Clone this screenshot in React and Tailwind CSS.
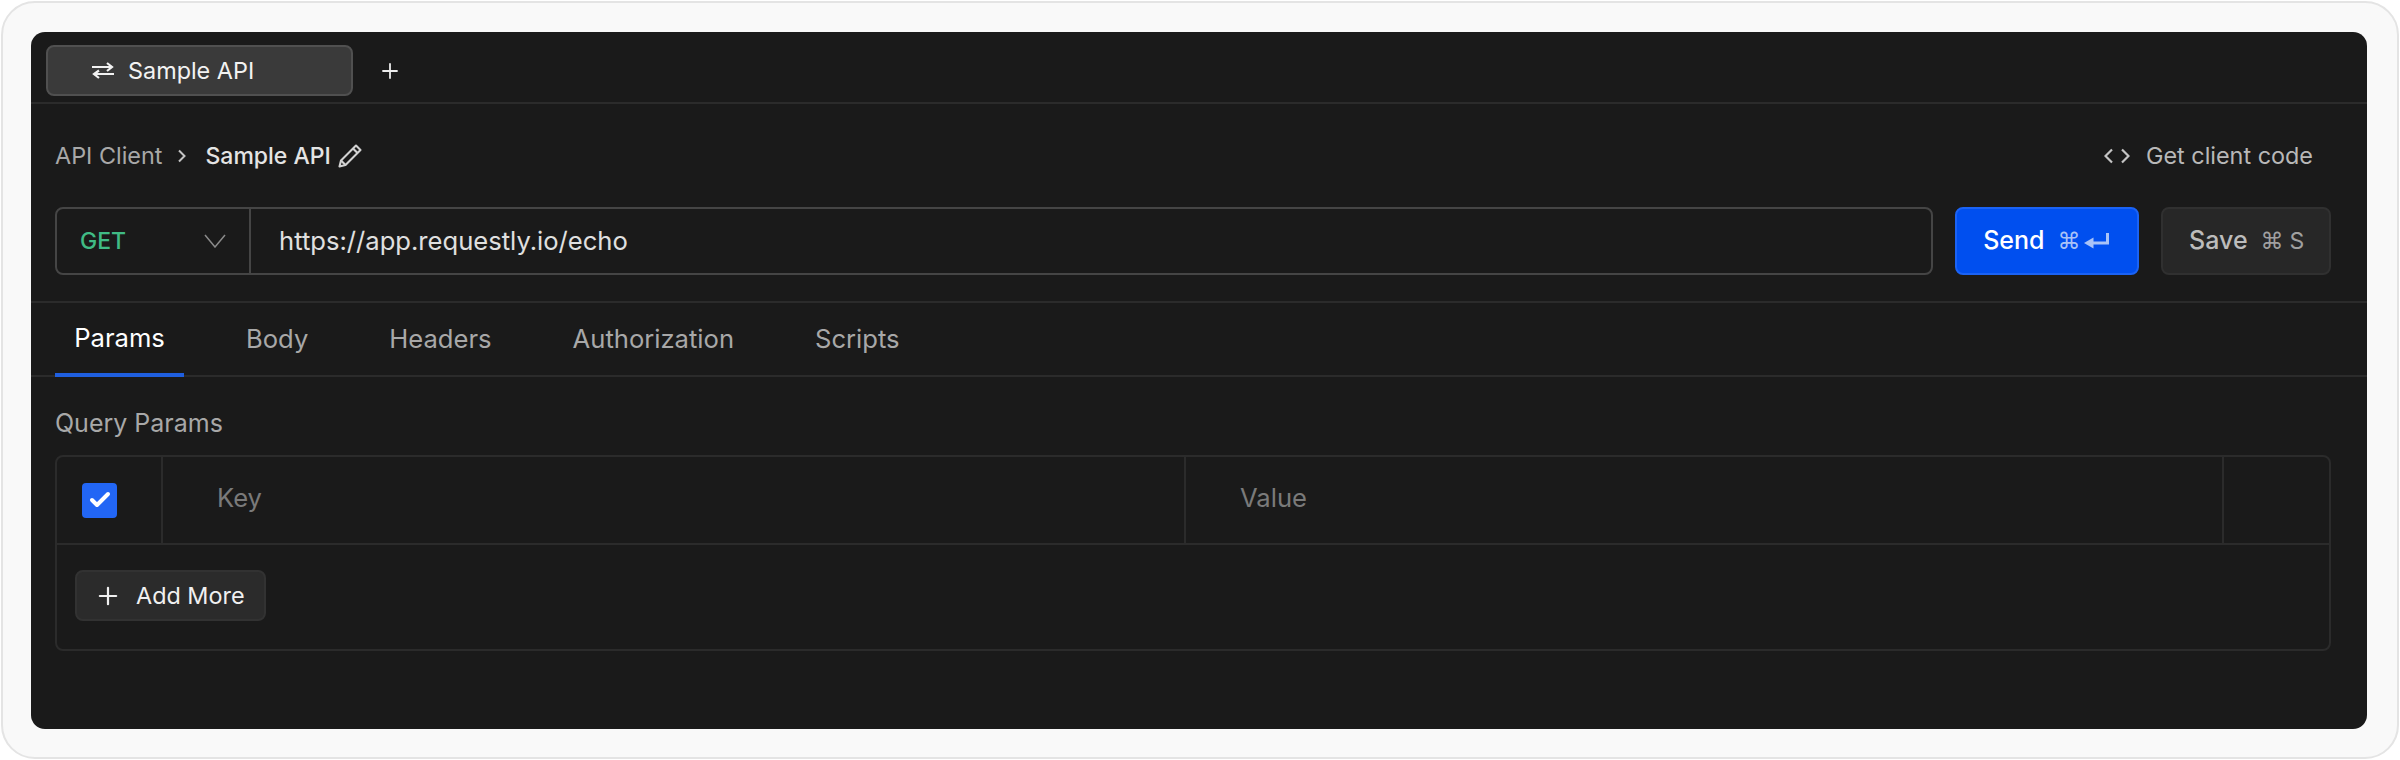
import React from "react";
import { Plus, Check } from "lucide-react";

const Font = { fontFamily: "Inter, sans-serif" };
const Cmd = { fontFamily: "'DejaVu Sans', sans-serif" };

function Swap() {
  return (
    <svg width="22" height="17" viewBox="0 0 22 17" fill="none" stroke="currentColor" strokeWidth="2.2" className="mr-[14px]">
      <path d="M0 5H20M15 1L20 5L15 9" />
      <path d="M22 12H2M7 8.5L2 12L7 16" />
    </svg>
  );
}

function EditPencil() {
  return (
    <svg width="24" height="24" viewBox="0 0 24 24" fill="none" stroke="currentColor" strokeWidth="2.1" strokeLinejoin="round" className="text-[#d2d2d2] ml-[7px]">
      <path d="M18 1.5L22.5 6L7.5 21L1.5 22.5L3 16.5Z" />
      <path d="M15 4.5L19.5 9" />
      <path d="M3 16.5L7.5 21" />
    </svg>
  );
}

function Crumb() {
  return (
    <svg width="8" height="14" viewBox="0 0 8 14" fill="none" stroke="currentColor" strokeWidth="2" className="text-[#c4c4c4] ml-[16px] mr-[19px]">
      <path d="M1 1.5L6.5 7L1 12.5" />
    </svg>
  );
}

function Down() {
  return (
    <svg width="22" height="14" viewBox="0 0 22 14" fill="none" stroke="currentColor" strokeWidth="1.5" className="text-[#8a8a8a]">
      <path d="M1 1L11 13L21 1" />
    </svg>
  );
}

function Brackets() {
  return (
    <svg width="26" height="16" viewBox="0 0 26 16" fill="none" stroke="currentColor" strokeWidth="2.2" className="text-[#c4c4c4] mr-[16px]">
      <path d="M8 1.5L1.5 8L8 14.5" />
      <path d="M18 1.5L24.5 8L18 14.5" />
    </svg>
  );
}

function Enter() {
  return (
    <svg width="25" height="18" viewBox="0 0 25 18" className="text-[#a9c3f7]">
      <path d="M23.5 1V11H8" fill="none" stroke="currentColor" strokeWidth="3" />
      <path d="M0 11L9.5 5.5V16.5Z" fill="currentColor" />
    </svg>
  );
}

export default function App() {
  return (
    <div className="w-[2400px] h-[760px] bg-white" style={Font}>
      <div className="w-[2398px] h-[758px] ml-px mt-px border-2 border-[#e4e4e4] rounded-[34px] bg-[#f9f9f9] pt-[29px] px-[28px]">
        <div className="w-[2336px] h-[697px] bg-[#1a1a1a] rounded-[14px] overflow-hidden flex flex-col">
          <div className="h-[72px] shrink-0 border-b-2 border-[#2b2b2b] flex items-start pt-[13px] pl-[15px]">
            <div className="w-[307px] h-[51px] rounded-[8px] bg-[#3a3a3a] border-2 border-[#505050] flex items-center pl-[44px] text-[23.4px] text-[#f2f2f2]">
              <Swap />
              Sample API
            </div>
            <div className="ml-[25px] h-[51px] flex items-center text-[#ececec]">
              <Plus size={24} strokeWidth={1.8} />
            </div>
          </div>

          <div className="h-[103px] shrink-0 flex items-start justify-between pl-[24px] pr-[54px] pt-[38px]">
            <div className="flex items-center h-[28px] text-[23.4px] leading-[28px]">
              <span className="text-[#a8a8a8]">API Client</span>
              <Crumb />
              <span className="text-[#e4e4e4] font-medium text-[23px]">Sample API</span>
              <EditPencil />
            </div>
            <div className="flex items-center h-[28px] text-[23.4px] leading-[28px] text-[#b8b8b8]">
              <Brackets />
              Get client code
            </div>
          </div>

          <div className="shrink-0 h-[68px] flex pl-[24px] pr-[36px]">
            <div className="w-[1879px] h-[68px] rounded-[8px] border-2 border-[#454545] flex">
              <div className="w-[194px] border-r-2 border-[#454545] flex items-center justify-between pl-[23px] pr-[23px]">
                <span className="text-[23px] font-medium text-[#40bb85]">GET</span>
                <Down />
              </div>
              <div className="flex-1 flex items-center pl-[28px] text-[25.6px] text-[#e0e0e0]">
                https://app.requestly.io/echo
              </div>
            </div>
            <div className="ml-[22px] w-[184px] h-[68px] rounded-[8px] bg-[#004fef] border-2 border-[#1b63f5] flex items-center pl-[26px] text-[25px] font-medium text-white">
              Send
              <span className="ml-[13px] text-[23px] font-normal text-[#a9c3f7]" style={Cmd}>⌘</span>
              <span className="ml-[4px]"><Enter /></span>
            </div>
            <div className="ml-[22px] w-[170px] h-[68px] rounded-[8px] bg-[#272727] border-2 border-[#303030] flex items-center pl-[26px] text-[25px] font-medium text-[#bcbcbc]">
              Save
              <span className="ml-[13px] text-[23px] font-normal text-[#a0a0a0]" style={Cmd}>⌘</span>
              <span className="ml-[6px] text-[23px] font-normal text-[#a0a0a0]">S</span>
            </div>
          </div>

          <div className="mt-[26px] h-[76px] shrink-0 border-t-2 border-b-2 border-[#2b2b2b] flex pl-[24px] text-[25.6px] text-[#a8a8a8]">
            <div className="w-[129px] h-[74px] border-b-[4px] border-[#1f5fe0] flex items-center justify-center text-white">Params</div>
            <div className="ml-[62px] h-[72px] flex items-center">Body</div>
            <div className="ml-[81px] h-[72px] flex items-center">Headers</div>
            <div className="ml-[81px] h-[72px] flex items-center">Authorization</div>
            <div className="ml-[81px] h-[72px] flex items-center">Scripts</div>
          </div>

          <div className="pl-[24px] pr-[36px] pt-[30px]">
            <div className="h-[32px] leading-[32px] text-[25px] text-[#a8a8a8]">Query Params</div>
            <div className="mt-[16px] h-[196px] rounded-[8px] border-2 border-[#2b2b2b] flex flex-col">
              <div className="h-[88px] shrink-0 border-b-2 border-[#2b2b2b] flex text-[25.6px] text-[#7a7a7a]">
                <div className="w-[106px] border-r-2 border-[#2b2b2b] flex items-center pl-[25px]">
                  <div className="w-[35px] h-[35px] rounded-[4px] bg-[#2266f5] flex items-center justify-center">
                    <Check size={24} strokeWidth={4} className="text-white" />
                  </div>
                </div>
                <div className="w-[1023px] border-r-2 border-[#2b2b2b] flex items-center pl-[54px] pb-[3px]">Key</div>
                <div className="w-[1038px] border-r-2 border-[#2b2b2b] flex items-center pl-[54px] pb-[3px]">Value</div>
              </div>
              <div className="pl-[18px] pt-[25px]">
                <div className="w-[191px] h-[51px] rounded-[8px] bg-[#2b2b2b] border-2 border-[#323232] flex items-center pl-[17px] text-[23.4px] text-[#f0f0f0]">
                  <Plus size={28} strokeWidth={1.9} className="mr-[14px]" />
                  Add More
                </div>
              </div>
            </div>
          </div>
        </div>
      </div>
    </div>
  );
}
